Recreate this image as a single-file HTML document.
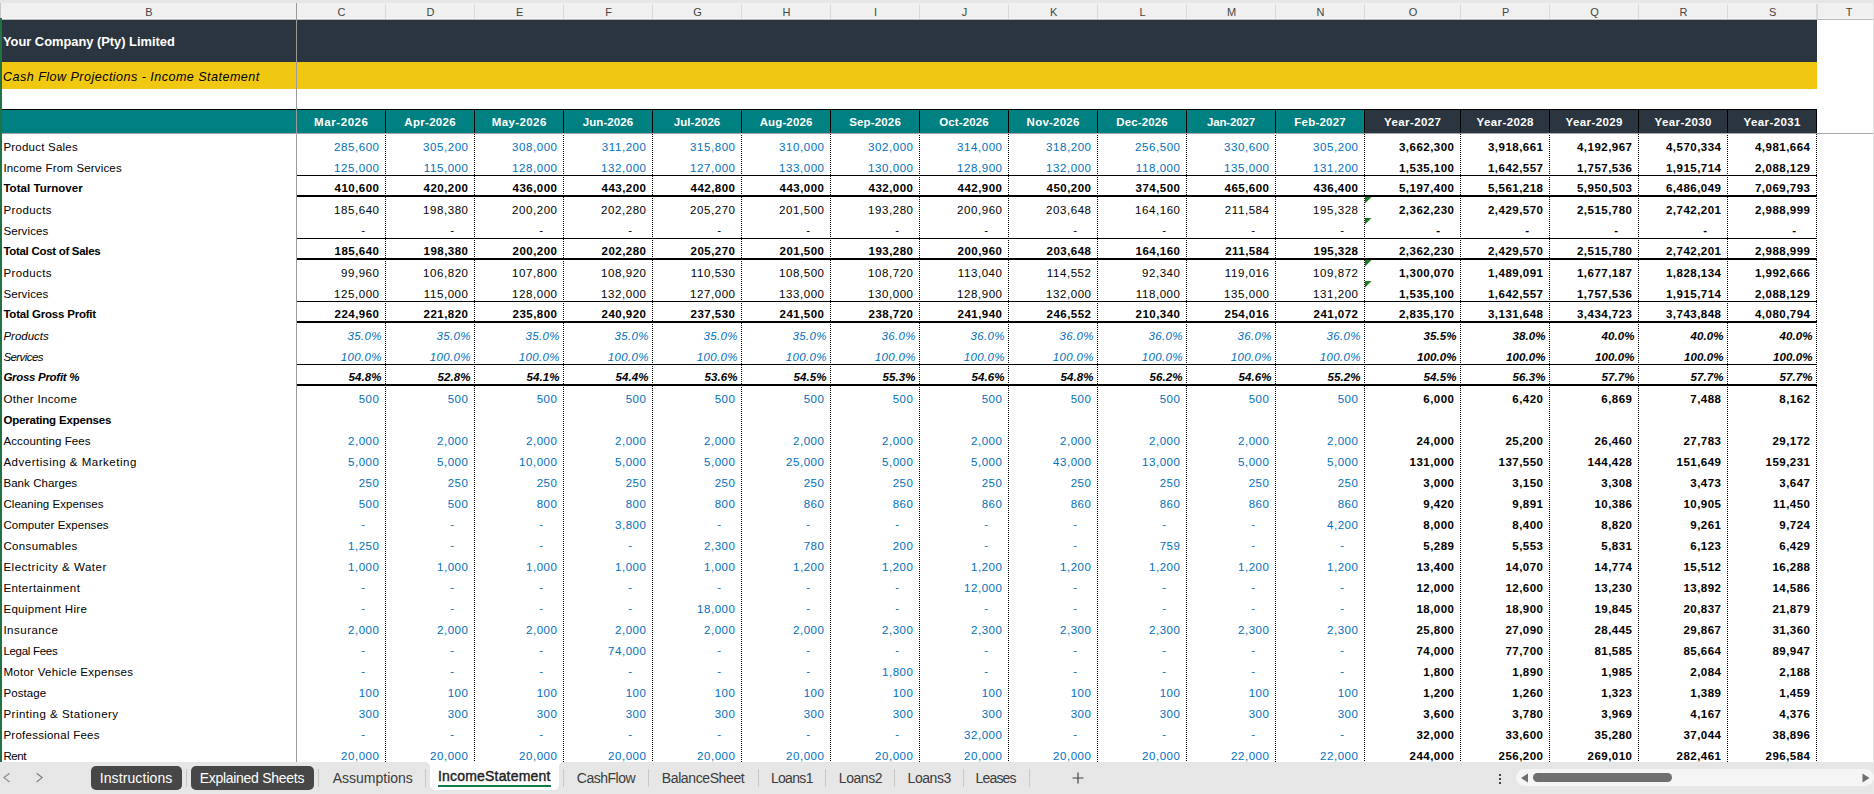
<!DOCTYPE html><html><head><meta charset='utf-8'><title>Income Statement</title><style>
html,body{margin:0;padding:0;}
body{width:1874px;height:794px;overflow:hidden;background:#fff;position:relative;font-family:"Liberation Sans",sans-serif;}
#root{position:absolute;left:0;top:0;width:1874px;height:794px;overflow:hidden;background:#fff;}
.a{position:absolute;white-space:nowrap;}
.bx{position:absolute;}
.t{position:absolute;white-space:nowrap;font-size:11.5px;line-height:14px;height:14px;color:#000;}
.ln{letter-spacing:0.24px} .lb{letter-spacing:-0.1px} .li{letter-spacing:-0.1px} .lbi{letter-spacing:-0.24px}
.nn{letter-spacing:0.57px} .nb{letter-spacing:0.48px} .ni{letter-spacing:0.37px} .nbi{letter-spacing:0.13px}
.r{text-align:right;}
.c{text-align:center;}
.b{font-weight:bold;}
.i{font-style:italic;}
.blue{color:#0070c0;}
.hl{position:absolute;white-space:nowrap;font-size:11px;line-height:14px;height:14px;color:#444;text-align:center;top:5px;}
.mh{position:absolute;white-space:nowrap;font-size:11.5px;letter-spacing:0.6px;line-height:14px;height:14px;color:#fff;font-weight:bold;text-align:center;top:115px;}
.tab{position:absolute;white-space:nowrap;font-size:14px;line-height:16px;height:16px;color:#3c3c3c;top:770px;}
.sep{position:absolute;width:1px;top:769px;height:18px;background:#c8c8c8;}
.dot{position:absolute;width:1px;background-image:repeating-linear-gradient(to bottom,#000 0,#000 1px,transparent 1px,transparent 2px);}
</style></head><body><div id='root'>
<div class='bx' style='left:0;top:0;width:1874px;height:3px;background:#e6e6e6'></div>
<div class='bx' style='left:0;top:3px;width:1874px;height:16px;background:#f0f0f0'></div>
<div class='bx' style='left:0;top:18px;width:1874px;height:1px;background:#f7f7f7'></div>
<div class='bx' style='left:0;top:19px;width:1874px;height:1px;background:#b9b9b9'></div>
<div class='bx' style='left:385px;top:4px;width:1px;height:15px;background:#dadada'></div>
<div class='bx' style='left:474px;top:4px;width:1px;height:15px;background:#dadada'></div>
<div class='bx' style='left:563px;top:4px;width:1px;height:15px;background:#dadada'></div>
<div class='bx' style='left:652px;top:4px;width:1px;height:15px;background:#dadada'></div>
<div class='bx' style='left:741px;top:4px;width:1px;height:15px;background:#dadada'></div>
<div class='bx' style='left:830px;top:4px;width:1px;height:15px;background:#dadada'></div>
<div class='bx' style='left:919px;top:4px;width:1px;height:15px;background:#dadada'></div>
<div class='bx' style='left:1008px;top:4px;width:1px;height:15px;background:#dadada'></div>
<div class='bx' style='left:1097px;top:4px;width:1px;height:15px;background:#dadada'></div>
<div class='bx' style='left:1186px;top:4px;width:1px;height:15px;background:#dadada'></div>
<div class='bx' style='left:1275px;top:4px;width:1px;height:15px;background:#dadada'></div>
<div class='bx' style='left:1364px;top:4px;width:1px;height:15px;background:#dadada'></div>
<div class='bx' style='left:1460px;top:4px;width:1px;height:15px;background:#dadada'></div>
<div class='bx' style='left:1549px;top:4px;width:1px;height:15px;background:#dadada'></div>
<div class='bx' style='left:1638px;top:4px;width:1px;height:15px;background:#dadada'></div>
<div class='bx' style='left:1727px;top:4px;width:1px;height:15px;background:#dadada'></div>
<div class='bx' style='left:1816px;top:4px;width:1px;height:15px;background:#dadada'></div>
<div class='bx' style='left:1817px;top:4px;width:1px;height:15px;background:#dadada'></div>
<div class='hl' style='left:99px;width:100px'>B</div>
<div class='hl' style='left:311.6px;width:60px'>C</div>
<div class='hl' style='left:400.6px;width:60px'>D</div>
<div class='hl' style='left:489.6px;width:60px'>E</div>
<div class='hl' style='left:578.6px;width:60px'>F</div>
<div class='hl' style='left:667.6px;width:60px'>G</div>
<div class='hl' style='left:756.6px;width:60px'>H</div>
<div class='hl' style='left:845.6px;width:60px'>I</div>
<div class='hl' style='left:934.6px;width:60px'>J</div>
<div class='hl' style='left:1023.6px;width:60px'>K</div>
<div class='hl' style='left:1112.6px;width:60px'>L</div>
<div class='hl' style='left:1201.6px;width:60px'>M</div>
<div class='hl' style='left:1290.6px;width:60px'>N</div>
<div class='hl' style='left:1383.1px;width:60px'>O</div>
<div class='hl' style='left:1475.6px;width:60px'>P</div>
<div class='hl' style='left:1564.6px;width:60px'>Q</div>
<div class='hl' style='left:1653.6px;width:60px'>R</div>
<div class='hl' style='left:1742.6px;width:60px'>S</div>
<div class='hl' style='left:1819px;width:60px'>T</div>
<div class='bx' style='left:0;top:20px;width:1817px;height:42px;background:#2b3540'></div>
<div class='bx' style='left:0;top:62px;width:1817px;height:27px;background:#f1c811'></div>
<div class='bx' style='left:0;top:109px;width:1817px;height:1px;background:#000'></div>
<div class='bx' style='left:0;top:110px;width:1365px;height:23px;background:#008080'></div>
<div class='bx' style='left:1365px;top:110px;width:452px;height:23px;background:#2b3540'></div>
<div class='a b' style='left:3px;top:33px;font-size:12.85px;line-height:18px;color:#fff'>Your Company (Pty) Limited</div>
<div class='a i' style='left:3px;top:68px;font-size:12.6px;letter-spacing:0.45px;line-height:18px;color:#000'>Cash Flow Projections - Income Statement</div>
<div class='bx' style='left:385px;top:110px;width:1px;height:23px;background:#000'></div>
<div class='bx' style='left:474px;top:110px;width:1px;height:23px;background:#000'></div>
<div class='bx' style='left:563px;top:110px;width:1px;height:23px;background:#000'></div>
<div class='bx' style='left:652px;top:110px;width:1px;height:23px;background:#000'></div>
<div class='bx' style='left:741px;top:110px;width:1px;height:23px;background:#000'></div>
<div class='bx' style='left:830px;top:110px;width:1px;height:23px;background:#000'></div>
<div class='bx' style='left:919px;top:110px;width:1px;height:23px;background:#000'></div>
<div class='bx' style='left:1008px;top:110px;width:1px;height:23px;background:#000'></div>
<div class='bx' style='left:1097px;top:110px;width:1px;height:23px;background:#000'></div>
<div class='bx' style='left:1186px;top:110px;width:1px;height:23px;background:#000'></div>
<div class='bx' style='left:1275px;top:110px;width:1px;height:23px;background:#000'></div>
<div class='bx' style='left:1364px;top:110px;width:1px;height:23px;background:#000'></div>
<div class='bx' style='left:1460px;top:110px;width:1px;height:23px;background:#000'></div>
<div class='bx' style='left:1549px;top:110px;width:1px;height:23px;background:#000'></div>
<div class='bx' style='left:1638px;top:110px;width:1px;height:23px;background:#000'></div>
<div class='bx' style='left:1727px;top:110px;width:1px;height:23px;background:#000'></div>
<div class='bx' style='left:1816px;top:110px;width:1px;height:23px;background:#000'></div>
<div class='mh' style='left:297.30px;width:88px;letter-spacing:0.6px'>Mar-2026</div>
<div class='mh' style='left:386.15px;width:88px;letter-spacing:0.31px'>Apr-2026</div>
<div class='mh' style='left:475.20px;width:88px;letter-spacing:0.41px'>May-2026</div>
<div class='mh' style='left:564.04px;width:88px;letter-spacing:0.09px'>Jun-2026</div>
<div class='mh' style='left:653.03px;width:88px;letter-spacing:0.07px'>Jul-2026</div>
<div class='mh' style='left:742.07px;width:88px;letter-spacing:0.13px'>Aug-2026</div>
<div class='mh' style='left:831.09px;width:88px;letter-spacing:0.17px'>Sep-2026</div>
<div class='mh' style='left:920.07px;width:88px;letter-spacing:0.14px'>Oct-2026</div>
<div class='mh' style='left:1009.12px;width:88px;letter-spacing:0.23px'>Nov-2026</div>
<div class='mh' style='left:1098.07px;width:88px;letter-spacing:0.13px'>Dec-2026</div>
<div class='mh' style='left:1186.92px;width:88px;letter-spacing:-0.16px'>Jan-2027</div>
<div class='mh' style='left:1276.10px;width:88px;letter-spacing:0.2px'>Feb-2027</div>
<div class='mh' style='left:1368.69px;width:88px;letter-spacing:0.38px'>Year-2027</div>
<div class='mh' style='left:1461.19px;width:88px;letter-spacing:0.38px'>Year-2028</div>
<div class='mh' style='left:1550.19px;width:88px;letter-spacing:0.38px'>Year-2029</div>
<div class='mh' style='left:1639.19px;width:88px;letter-spacing:0.38px'>Year-2030</div>
<div class='mh' style='left:1728.19px;width:88px;letter-spacing:0.38px'>Year-2031</div>
<div class='dot' style='left:385px;top:135px;height:627px'></div>
<div class='dot' style='left:474px;top:134px;height:628px'></div>
<div class='dot' style='left:563px;top:135px;height:627px'></div>
<div class='dot' style='left:652px;top:134px;height:628px'></div>
<div class='dot' style='left:741px;top:135px;height:627px'></div>
<div class='dot' style='left:830px;top:134px;height:628px'></div>
<div class='dot' style='left:919px;top:135px;height:627px'></div>
<div class='dot' style='left:1008px;top:134px;height:628px'></div>
<div class='dot' style='left:1097px;top:135px;height:627px'></div>
<div class='dot' style='left:1186px;top:134px;height:628px'></div>
<div class='dot' style='left:1275px;top:135px;height:627px'></div>
<div class='dot' style='left:1364px;top:134px;height:628px'></div>
<div class='dot' style='left:1460px;top:134px;height:628px'></div>
<div class='dot' style='left:1549px;top:135px;height:627px'></div>
<div class='dot' style='left:1638px;top:134px;height:628px'></div>
<div class='dot' style='left:1727px;top:135px;height:627px'></div>
<div class='dot' style='left:1816px;top:134px;height:628px'></div>
<div class='t ln' style='left:3.4px;top:140px;letter-spacing:0.223px;'>Product Sales</div>
<div class='t blue nn r' style='left:299.57px;width:80px;top:140px'>285,600</div>
<div class='t blue nn r' style='left:388.57px;width:80px;top:140px'>305,200</div>
<div class='t blue nn r' style='left:477.57px;width:80px;top:140px'>308,000</div>
<div class='t blue nn r' style='left:566.57px;width:80px;top:140px'>311,200</div>
<div class='t blue nn r' style='left:655.57px;width:80px;top:140px'>315,800</div>
<div class='t blue nn r' style='left:744.57px;width:80px;top:140px'>310,000</div>
<div class='t blue nn r' style='left:833.57px;width:80px;top:140px'>302,000</div>
<div class='t blue nn r' style='left:922.57px;width:80px;top:140px'>314,000</div>
<div class='t blue nn r' style='left:1011.57px;width:80px;top:140px'>318,200</div>
<div class='t blue nn r' style='left:1100.57px;width:80px;top:140px'>256,500</div>
<div class='t blue nn r' style='left:1189.57px;width:80px;top:140px'>330,600</div>
<div class='t blue nn r' style='left:1278.57px;width:80px;top:140px'>305,200</div>
<div class='t b nb r' style='left:1374.48px;width:80px;top:140px'>3,662,300</div>
<div class='t b nb r' style='left:1463.48px;width:80px;top:140px'>3,918,661</div>
<div class='t b nb r' style='left:1552.48px;width:80px;top:140px'>4,192,967</div>
<div class='t b nb r' style='left:1641.48px;width:80px;top:140px'>4,570,334</div>
<div class='t b nb r' style='left:1730.48px;width:80px;top:140px'>4,981,664</div>
<div class='t ln' style='left:3.4px;top:161px;letter-spacing:0.172px;'>Income From Services</div>
<div class='t blue nn r' style='left:299.57px;width:80px;top:161px'>125,000</div>
<div class='t blue nn r' style='left:388.57px;width:80px;top:161px'>115,000</div>
<div class='t blue nn r' style='left:477.57px;width:80px;top:161px'>128,000</div>
<div class='t blue nn r' style='left:566.57px;width:80px;top:161px'>132,000</div>
<div class='t blue nn r' style='left:655.57px;width:80px;top:161px'>127,000</div>
<div class='t blue nn r' style='left:744.57px;width:80px;top:161px'>133,000</div>
<div class='t blue nn r' style='left:833.57px;width:80px;top:161px'>130,000</div>
<div class='t blue nn r' style='left:922.57px;width:80px;top:161px'>128,900</div>
<div class='t blue nn r' style='left:1011.57px;width:80px;top:161px'>132,000</div>
<div class='t blue nn r' style='left:1100.57px;width:80px;top:161px'>118,000</div>
<div class='t blue nn r' style='left:1189.57px;width:80px;top:161px'>135,000</div>
<div class='t blue nn r' style='left:1278.57px;width:80px;top:161px'>131,200</div>
<div class='t b nb r' style='left:1374.48px;width:80px;top:161px'>1,535,100</div>
<div class='t b nb r' style='left:1463.48px;width:80px;top:161px'>1,642,557</div>
<div class='t b nb r' style='left:1552.48px;width:80px;top:161px'>1,757,536</div>
<div class='t b nb r' style='left:1641.48px;width:80px;top:161px'>1,915,714</div>
<div class='t b nb r' style='left:1730.48px;width:80px;top:161px'>2,088,129</div>
<div class='t b lb' style='left:3.4px;top:181px;letter-spacing:0.038px;'>Total Turnover</div>
<div class='t b nb r' style='left:299.48px;width:80px;top:181px'>410,600</div>
<div class='t b nb r' style='left:388.48px;width:80px;top:181px'>420,200</div>
<div class='t b nb r' style='left:477.48px;width:80px;top:181px'>436,000</div>
<div class='t b nb r' style='left:566.48px;width:80px;top:181px'>443,200</div>
<div class='t b nb r' style='left:655.48px;width:80px;top:181px'>442,800</div>
<div class='t b nb r' style='left:744.48px;width:80px;top:181px'>443,000</div>
<div class='t b nb r' style='left:833.48px;width:80px;top:181px'>432,000</div>
<div class='t b nb r' style='left:922.48px;width:80px;top:181px'>442,900</div>
<div class='t b nb r' style='left:1011.48px;width:80px;top:181px'>450,200</div>
<div class='t b nb r' style='left:1100.48px;width:80px;top:181px'>374,500</div>
<div class='t b nb r' style='left:1189.48px;width:80px;top:181px'>465,600</div>
<div class='t b nb r' style='left:1278.48px;width:80px;top:181px'>436,400</div>
<div class='t b nb r' style='left:1374.48px;width:80px;top:181px'>5,197,400</div>
<div class='t b nb r' style='left:1463.48px;width:80px;top:181px'>5,561,218</div>
<div class='t b nb r' style='left:1552.48px;width:80px;top:181px'>5,950,503</div>
<div class='t b nb r' style='left:1641.48px;width:80px;top:181px'>6,486,049</div>
<div class='t b nb r' style='left:1730.48px;width:80px;top:181px'>7,069,793</div>
<div class='bx' style='left:297px;top:175px;width:1520px;height:1px;background:#000'></div>
<div class='bx' style='left:297px;top:195px;width:1520px;height:2px;background:#000'></div>
<div class='t ln' style='left:3.4px;top:203px;letter-spacing:0.397px;'>Products</div>
<div class='t nn r' style='left:299.57px;width:80px;top:203px'>185,640</div>
<div class='t nn r' style='left:388.57px;width:80px;top:203px'>198,380</div>
<div class='t nn r' style='left:477.57px;width:80px;top:203px'>200,200</div>
<div class='t nn r' style='left:566.57px;width:80px;top:203px'>202,280</div>
<div class='t nn r' style='left:655.57px;width:80px;top:203px'>205,270</div>
<div class='t nn r' style='left:744.57px;width:80px;top:203px'>201,500</div>
<div class='t nn r' style='left:833.57px;width:80px;top:203px'>193,280</div>
<div class='t nn r' style='left:922.57px;width:80px;top:203px'>200,960</div>
<div class='t nn r' style='left:1011.57px;width:80px;top:203px'>203,648</div>
<div class='t nn r' style='left:1100.57px;width:80px;top:203px'>164,160</div>
<div class='t nn r' style='left:1189.57px;width:80px;top:203px'>211,584</div>
<div class='t nn r' style='left:1278.57px;width:80px;top:203px'>195,328</div>
<div class='t b nb r' style='left:1374.48px;width:80px;top:203px'>2,362,230</div>
<div class='t b nb r' style='left:1463.48px;width:80px;top:203px'>2,429,570</div>
<div class='t b nb r' style='left:1552.48px;width:80px;top:203px'>2,515,780</div>
<div class='t b nb r' style='left:1641.48px;width:80px;top:203px'>2,742,201</div>
<div class='t b nb r' style='left:1730.48px;width:80px;top:203px'>2,988,999</div>
<div class='t ln' style='left:3.4px;top:224px;letter-spacing:0.111px;'>Services</div>
<div class='t nn r' style='left:285.57px;width:80px;top:223px'>-</div>
<div class='t nn r' style='left:374.57px;width:80px;top:223px'>-</div>
<div class='t nn r' style='left:463.57px;width:80px;top:223px'>-</div>
<div class='t nn r' style='left:552.57px;width:80px;top:223px'>-</div>
<div class='t nn r' style='left:641.57px;width:80px;top:223px'>-</div>
<div class='t nn r' style='left:730.57px;width:80px;top:223px'>-</div>
<div class='t nn r' style='left:819.57px;width:80px;top:223px'>-</div>
<div class='t nn r' style='left:908.57px;width:80px;top:223px'>-</div>
<div class='t nn r' style='left:997.57px;width:80px;top:223px'>-</div>
<div class='t nn r' style='left:1086.57px;width:80px;top:223px'>-</div>
<div class='t nn r' style='left:1175.57px;width:80px;top:223px'>-</div>
<div class='t nn r' style='left:1264.57px;width:80px;top:223px'>-</div>
<div class='t b nb r' style='left:1360.48px;width:80px;top:223px'>-</div>
<div class='t b nb r' style='left:1449.48px;width:80px;top:223px'>-</div>
<div class='t b nb r' style='left:1538.48px;width:80px;top:223px'>-</div>
<div class='t b nb r' style='left:1627.48px;width:80px;top:223px'>-</div>
<div class='t b nb r' style='left:1716.48px;width:80px;top:223px'>-</div>
<div class='t b lb' style='left:3.4px;top:244px;letter-spacing:-0.300px;'>Total Cost of Sales</div>
<div class='t b nb r' style='left:299.48px;width:80px;top:244px'>185,640</div>
<div class='t b nb r' style='left:388.48px;width:80px;top:244px'>198,380</div>
<div class='t b nb r' style='left:477.48px;width:80px;top:244px'>200,200</div>
<div class='t b nb r' style='left:566.48px;width:80px;top:244px'>202,280</div>
<div class='t b nb r' style='left:655.48px;width:80px;top:244px'>205,270</div>
<div class='t b nb r' style='left:744.48px;width:80px;top:244px'>201,500</div>
<div class='t b nb r' style='left:833.48px;width:80px;top:244px'>193,280</div>
<div class='t b nb r' style='left:922.48px;width:80px;top:244px'>200,960</div>
<div class='t b nb r' style='left:1011.48px;width:80px;top:244px'>203,648</div>
<div class='t b nb r' style='left:1100.48px;width:80px;top:244px'>164,160</div>
<div class='t b nb r' style='left:1189.48px;width:80px;top:244px'>211,584</div>
<div class='t b nb r' style='left:1278.48px;width:80px;top:244px'>195,328</div>
<div class='t b nb r' style='left:1374.48px;width:80px;top:244px'>2,362,230</div>
<div class='t b nb r' style='left:1463.48px;width:80px;top:244px'>2,429,570</div>
<div class='t b nb r' style='left:1552.48px;width:80px;top:244px'>2,515,780</div>
<div class='t b nb r' style='left:1641.48px;width:80px;top:244px'>2,742,201</div>
<div class='t b nb r' style='left:1730.48px;width:80px;top:244px'>2,988,999</div>
<div class='bx' style='left:297px;top:238px;width:1520px;height:1px;background:#000'></div>
<div class='bx' style='left:297px;top:258px;width:1520px;height:2px;background:#000'></div>
<div class='t ln' style='left:3.4px;top:266px;letter-spacing:0.397px;'>Products</div>
<div class='t nn r' style='left:299.57px;width:80px;top:266px'>99,960</div>
<div class='t nn r' style='left:388.57px;width:80px;top:266px'>106,820</div>
<div class='t nn r' style='left:477.57px;width:80px;top:266px'>107,800</div>
<div class='t nn r' style='left:566.57px;width:80px;top:266px'>108,920</div>
<div class='t nn r' style='left:655.57px;width:80px;top:266px'>110,530</div>
<div class='t nn r' style='left:744.57px;width:80px;top:266px'>108,500</div>
<div class='t nn r' style='left:833.57px;width:80px;top:266px'>108,720</div>
<div class='t nn r' style='left:922.57px;width:80px;top:266px'>113,040</div>
<div class='t nn r' style='left:1011.57px;width:80px;top:266px'>114,552</div>
<div class='t nn r' style='left:1100.57px;width:80px;top:266px'>92,340</div>
<div class='t nn r' style='left:1189.57px;width:80px;top:266px'>119,016</div>
<div class='t nn r' style='left:1278.57px;width:80px;top:266px'>109,872</div>
<div class='t b nb r' style='left:1374.48px;width:80px;top:266px'>1,300,070</div>
<div class='t b nb r' style='left:1463.48px;width:80px;top:266px'>1,489,091</div>
<div class='t b nb r' style='left:1552.48px;width:80px;top:266px'>1,677,187</div>
<div class='t b nb r' style='left:1641.48px;width:80px;top:266px'>1,828,134</div>
<div class='t b nb r' style='left:1730.48px;width:80px;top:266px'>1,992,666</div>
<div class='t ln' style='left:3.4px;top:287px;letter-spacing:0.111px;'>Services</div>
<div class='t nn r' style='left:299.57px;width:80px;top:287px'>125,000</div>
<div class='t nn r' style='left:388.57px;width:80px;top:287px'>115,000</div>
<div class='t nn r' style='left:477.57px;width:80px;top:287px'>128,000</div>
<div class='t nn r' style='left:566.57px;width:80px;top:287px'>132,000</div>
<div class='t nn r' style='left:655.57px;width:80px;top:287px'>127,000</div>
<div class='t nn r' style='left:744.57px;width:80px;top:287px'>133,000</div>
<div class='t nn r' style='left:833.57px;width:80px;top:287px'>130,000</div>
<div class='t nn r' style='left:922.57px;width:80px;top:287px'>128,900</div>
<div class='t nn r' style='left:1011.57px;width:80px;top:287px'>132,000</div>
<div class='t nn r' style='left:1100.57px;width:80px;top:287px'>118,000</div>
<div class='t nn r' style='left:1189.57px;width:80px;top:287px'>135,000</div>
<div class='t nn r' style='left:1278.57px;width:80px;top:287px'>131,200</div>
<div class='t b nb r' style='left:1374.48px;width:80px;top:287px'>1,535,100</div>
<div class='t b nb r' style='left:1463.48px;width:80px;top:287px'>1,642,557</div>
<div class='t b nb r' style='left:1552.48px;width:80px;top:287px'>1,757,536</div>
<div class='t b nb r' style='left:1641.48px;width:80px;top:287px'>1,915,714</div>
<div class='t b nb r' style='left:1730.48px;width:80px;top:287px'>2,088,129</div>
<div class='t b lb' style='left:3.4px;top:307px;letter-spacing:-0.206px;'>Total Gross Profit</div>
<div class='t b nb r' style='left:299.48px;width:80px;top:307px'>224,960</div>
<div class='t b nb r' style='left:388.48px;width:80px;top:307px'>221,820</div>
<div class='t b nb r' style='left:477.48px;width:80px;top:307px'>235,800</div>
<div class='t b nb r' style='left:566.48px;width:80px;top:307px'>240,920</div>
<div class='t b nb r' style='left:655.48px;width:80px;top:307px'>237,530</div>
<div class='t b nb r' style='left:744.48px;width:80px;top:307px'>241,500</div>
<div class='t b nb r' style='left:833.48px;width:80px;top:307px'>238,720</div>
<div class='t b nb r' style='left:922.48px;width:80px;top:307px'>241,940</div>
<div class='t b nb r' style='left:1011.48px;width:80px;top:307px'>246,552</div>
<div class='t b nb r' style='left:1100.48px;width:80px;top:307px'>210,340</div>
<div class='t b nb r' style='left:1189.48px;width:80px;top:307px'>254,016</div>
<div class='t b nb r' style='left:1278.48px;width:80px;top:307px'>241,072</div>
<div class='t b nb r' style='left:1374.48px;width:80px;top:307px'>2,835,170</div>
<div class='t b nb r' style='left:1463.48px;width:80px;top:307px'>3,131,648</div>
<div class='t b nb r' style='left:1552.48px;width:80px;top:307px'>3,434,723</div>
<div class='t b nb r' style='left:1641.48px;width:80px;top:307px'>3,743,848</div>
<div class='t b nb r' style='left:1730.48px;width:80px;top:307px'>4,080,794</div>
<div class='bx' style='left:297px;top:301px;width:1520px;height:1px;background:#000'></div>
<div class='bx' style='left:297px;top:321px;width:1520px;height:2px;background:#000'></div>
<div class='t i li' style='left:3.4px;top:329px;letter-spacing:-0.000px;'>Products</div>
<div class='t i blue ni r' style='left:301.97px;width:80px;top:329px'>35.0%</div>
<div class='t i blue ni r' style='left:390.97px;width:80px;top:329px'>35.0%</div>
<div class='t i blue ni r' style='left:479.97px;width:80px;top:329px'>35.0%</div>
<div class='t i blue ni r' style='left:568.97px;width:80px;top:329px'>35.0%</div>
<div class='t i blue ni r' style='left:657.97px;width:80px;top:329px'>35.0%</div>
<div class='t i blue ni r' style='left:746.97px;width:80px;top:329px'>35.0%</div>
<div class='t i blue ni r' style='left:835.97px;width:80px;top:329px'>36.0%</div>
<div class='t i blue ni r' style='left:924.97px;width:80px;top:329px'>36.0%</div>
<div class='t i blue ni r' style='left:1013.97px;width:80px;top:329px'>36.0%</div>
<div class='t i blue ni r' style='left:1102.97px;width:80px;top:329px'>36.0%</div>
<div class='t i blue ni r' style='left:1191.97px;width:80px;top:329px'>36.0%</div>
<div class='t i blue ni r' style='left:1280.97px;width:80px;top:329px'>36.0%</div>
<div class='t i b nbi r' style='left:1376.73px;width:80px;top:329px'>35.5%</div>
<div class='t i b nbi r' style='left:1465.73px;width:80px;top:329px'>38.0%</div>
<div class='t i b nbi r' style='left:1554.73px;width:80px;top:329px'>40.0%</div>
<div class='t i b nbi r' style='left:1643.73px;width:80px;top:329px'>40.0%</div>
<div class='t i b nbi r' style='left:1732.73px;width:80px;top:329px'>40.0%</div>
<div class='t i li' style='left:3.4px;top:350px;letter-spacing:-0.557px;'>Services</div>
<div class='t i blue ni r' style='left:301.97px;width:80px;top:350px'>100.0%</div>
<div class='t i blue ni r' style='left:390.97px;width:80px;top:350px'>100.0%</div>
<div class='t i blue ni r' style='left:479.97px;width:80px;top:350px'>100.0%</div>
<div class='t i blue ni r' style='left:568.97px;width:80px;top:350px'>100.0%</div>
<div class='t i blue ni r' style='left:657.97px;width:80px;top:350px'>100.0%</div>
<div class='t i blue ni r' style='left:746.97px;width:80px;top:350px'>100.0%</div>
<div class='t i blue ni r' style='left:835.97px;width:80px;top:350px'>100.0%</div>
<div class='t i blue ni r' style='left:924.97px;width:80px;top:350px'>100.0%</div>
<div class='t i blue ni r' style='left:1013.97px;width:80px;top:350px'>100.0%</div>
<div class='t i blue ni r' style='left:1102.97px;width:80px;top:350px'>100.0%</div>
<div class='t i blue ni r' style='left:1191.97px;width:80px;top:350px'>100.0%</div>
<div class='t i blue ni r' style='left:1280.97px;width:80px;top:350px'>100.0%</div>
<div class='t i b nbi r' style='left:1376.73px;width:80px;top:350px'>100.0%</div>
<div class='t i b nbi r' style='left:1465.73px;width:80px;top:350px'>100.0%</div>
<div class='t i b nbi r' style='left:1554.73px;width:80px;top:350px'>100.0%</div>
<div class='t i b nbi r' style='left:1643.73px;width:80px;top:350px'>100.0%</div>
<div class='t i b nbi r' style='left:1732.73px;width:80px;top:350px'>100.0%</div>
<div class='t b i lbi' style='left:3.4px;top:370px;letter-spacing:-0.294px;'>Gross Profit %</div>
<div class='t b i nbi r' style='left:301.73px;width:80px;top:370px'>54.8%</div>
<div class='t b i nbi r' style='left:390.73px;width:80px;top:370px'>52.8%</div>
<div class='t b i nbi r' style='left:479.73px;width:80px;top:370px'>54.1%</div>
<div class='t b i nbi r' style='left:568.73px;width:80px;top:370px'>54.4%</div>
<div class='t b i nbi r' style='left:657.73px;width:80px;top:370px'>53.6%</div>
<div class='t b i nbi r' style='left:746.73px;width:80px;top:370px'>54.5%</div>
<div class='t b i nbi r' style='left:835.73px;width:80px;top:370px'>55.3%</div>
<div class='t b i nbi r' style='left:924.73px;width:80px;top:370px'>54.6%</div>
<div class='t b i nbi r' style='left:1013.73px;width:80px;top:370px'>54.8%</div>
<div class='t b i nbi r' style='left:1102.73px;width:80px;top:370px'>56.2%</div>
<div class='t b i nbi r' style='left:1191.73px;width:80px;top:370px'>54.6%</div>
<div class='t b i nbi r' style='left:1280.73px;width:80px;top:370px'>55.2%</div>
<div class='t b i nbi r' style='left:1376.73px;width:80px;top:370px'>54.5%</div>
<div class='t b i nbi r' style='left:1465.73px;width:80px;top:370px'>56.3%</div>
<div class='t b i nbi r' style='left:1554.73px;width:80px;top:370px'>57.7%</div>
<div class='t b i nbi r' style='left:1643.73px;width:80px;top:370px'>57.7%</div>
<div class='t b i nbi r' style='left:1732.73px;width:80px;top:370px'>57.7%</div>
<div class='bx' style='left:297px;top:364px;width:1520px;height:1px;background:#000'></div>
<div class='bx' style='left:297px;top:384px;width:1520px;height:2px;background:#000'></div>
<div class='t ln' style='left:3.4px;top:392px;letter-spacing:0.340px;'>Other Income</div>
<div class='t blue nn r' style='left:299.57px;width:80px;top:392px'>500</div>
<div class='t blue nn r' style='left:388.57px;width:80px;top:392px'>500</div>
<div class='t blue nn r' style='left:477.57px;width:80px;top:392px'>500</div>
<div class='t blue nn r' style='left:566.57px;width:80px;top:392px'>500</div>
<div class='t blue nn r' style='left:655.57px;width:80px;top:392px'>500</div>
<div class='t blue nn r' style='left:744.57px;width:80px;top:392px'>500</div>
<div class='t blue nn r' style='left:833.57px;width:80px;top:392px'>500</div>
<div class='t blue nn r' style='left:922.57px;width:80px;top:392px'>500</div>
<div class='t blue nn r' style='left:1011.57px;width:80px;top:392px'>500</div>
<div class='t blue nn r' style='left:1100.57px;width:80px;top:392px'>500</div>
<div class='t blue nn r' style='left:1189.57px;width:80px;top:392px'>500</div>
<div class='t blue nn r' style='left:1278.57px;width:80px;top:392px'>500</div>
<div class='t b nb r' style='left:1374.48px;width:80px;top:392px'>6,000</div>
<div class='t b nb r' style='left:1463.48px;width:80px;top:392px'>6,420</div>
<div class='t b nb r' style='left:1552.48px;width:80px;top:392px'>6,869</div>
<div class='t b nb r' style='left:1641.48px;width:80px;top:392px'>7,488</div>
<div class='t b nb r' style='left:1730.48px;width:80px;top:392px'>8,162</div>
<div class='t b lb' style='left:3.4px;top:413px;letter-spacing:-0.194px;'>Operating Expenses</div>
<div class='t ln' style='left:3.4px;top:434px;letter-spacing:0.111px;'>Accounting Fees</div>
<div class='t blue nn r' style='left:299.57px;width:80px;top:434px'>2,000</div>
<div class='t blue nn r' style='left:388.57px;width:80px;top:434px'>2,000</div>
<div class='t blue nn r' style='left:477.57px;width:80px;top:434px'>2,000</div>
<div class='t blue nn r' style='left:566.57px;width:80px;top:434px'>2,000</div>
<div class='t blue nn r' style='left:655.57px;width:80px;top:434px'>2,000</div>
<div class='t blue nn r' style='left:744.57px;width:80px;top:434px'>2,000</div>
<div class='t blue nn r' style='left:833.57px;width:80px;top:434px'>2,000</div>
<div class='t blue nn r' style='left:922.57px;width:80px;top:434px'>2,000</div>
<div class='t blue nn r' style='left:1011.57px;width:80px;top:434px'>2,000</div>
<div class='t blue nn r' style='left:1100.57px;width:80px;top:434px'>2,000</div>
<div class='t blue nn r' style='left:1189.57px;width:80px;top:434px'>2,000</div>
<div class='t blue nn r' style='left:1278.57px;width:80px;top:434px'>2,000</div>
<div class='t b nb r' style='left:1374.48px;width:80px;top:434px'>24,000</div>
<div class='t b nb r' style='left:1463.48px;width:80px;top:434px'>25,200</div>
<div class='t b nb r' style='left:1552.48px;width:80px;top:434px'>26,460</div>
<div class='t b nb r' style='left:1641.48px;width:80px;top:434px'>27,783</div>
<div class='t b nb r' style='left:1730.48px;width:80px;top:434px'>29,172</div>
<div class='t ln' style='left:3.4px;top:455px;letter-spacing:0.526px;'>Advertising &amp; Marketing</div>
<div class='t blue nn r' style='left:299.57px;width:80px;top:455px'>5,000</div>
<div class='t blue nn r' style='left:388.57px;width:80px;top:455px'>5,000</div>
<div class='t blue nn r' style='left:477.57px;width:80px;top:455px'>10,000</div>
<div class='t blue nn r' style='left:566.57px;width:80px;top:455px'>5,000</div>
<div class='t blue nn r' style='left:655.57px;width:80px;top:455px'>5,000</div>
<div class='t blue nn r' style='left:744.57px;width:80px;top:455px'>25,000</div>
<div class='t blue nn r' style='left:833.57px;width:80px;top:455px'>5,000</div>
<div class='t blue nn r' style='left:922.57px;width:80px;top:455px'>5,000</div>
<div class='t blue nn r' style='left:1011.57px;width:80px;top:455px'>43,000</div>
<div class='t blue nn r' style='left:1100.57px;width:80px;top:455px'>13,000</div>
<div class='t blue nn r' style='left:1189.57px;width:80px;top:455px'>5,000</div>
<div class='t blue nn r' style='left:1278.57px;width:80px;top:455px'>5,000</div>
<div class='t b nb r' style='left:1374.48px;width:80px;top:455px'>131,000</div>
<div class='t b nb r' style='left:1463.48px;width:80px;top:455px'>137,550</div>
<div class='t b nb r' style='left:1552.48px;width:80px;top:455px'>144,428</div>
<div class='t b nb r' style='left:1641.48px;width:80px;top:455px'>151,649</div>
<div class='t b nb r' style='left:1730.48px;width:80px;top:455px'>159,231</div>
<div class='t ln' style='left:3.4px;top:476px;letter-spacing:0.076px;'>Bank Charges</div>
<div class='t blue nn r' style='left:299.57px;width:80px;top:476px'>250</div>
<div class='t blue nn r' style='left:388.57px;width:80px;top:476px'>250</div>
<div class='t blue nn r' style='left:477.57px;width:80px;top:476px'>250</div>
<div class='t blue nn r' style='left:566.57px;width:80px;top:476px'>250</div>
<div class='t blue nn r' style='left:655.57px;width:80px;top:476px'>250</div>
<div class='t blue nn r' style='left:744.57px;width:80px;top:476px'>250</div>
<div class='t blue nn r' style='left:833.57px;width:80px;top:476px'>250</div>
<div class='t blue nn r' style='left:922.57px;width:80px;top:476px'>250</div>
<div class='t blue nn r' style='left:1011.57px;width:80px;top:476px'>250</div>
<div class='t blue nn r' style='left:1100.57px;width:80px;top:476px'>250</div>
<div class='t blue nn r' style='left:1189.57px;width:80px;top:476px'>250</div>
<div class='t blue nn r' style='left:1278.57px;width:80px;top:476px'>250</div>
<div class='t b nb r' style='left:1374.48px;width:80px;top:476px'>3,000</div>
<div class='t b nb r' style='left:1463.48px;width:80px;top:476px'>3,150</div>
<div class='t b nb r' style='left:1552.48px;width:80px;top:476px'>3,308</div>
<div class='t b nb r' style='left:1641.48px;width:80px;top:476px'>3,473</div>
<div class='t b nb r' style='left:1730.48px;width:80px;top:476px'>3,647</div>
<div class='t ln' style='left:3.4px;top:497px;letter-spacing:0.065px;'>Cleaning Expenses</div>
<div class='t blue nn r' style='left:299.57px;width:80px;top:497px'>500</div>
<div class='t blue nn r' style='left:388.57px;width:80px;top:497px'>500</div>
<div class='t blue nn r' style='left:477.57px;width:80px;top:497px'>800</div>
<div class='t blue nn r' style='left:566.57px;width:80px;top:497px'>800</div>
<div class='t blue nn r' style='left:655.57px;width:80px;top:497px'>800</div>
<div class='t blue nn r' style='left:744.57px;width:80px;top:497px'>860</div>
<div class='t blue nn r' style='left:833.57px;width:80px;top:497px'>860</div>
<div class='t blue nn r' style='left:922.57px;width:80px;top:497px'>860</div>
<div class='t blue nn r' style='left:1011.57px;width:80px;top:497px'>860</div>
<div class='t blue nn r' style='left:1100.57px;width:80px;top:497px'>860</div>
<div class='t blue nn r' style='left:1189.57px;width:80px;top:497px'>860</div>
<div class='t blue nn r' style='left:1278.57px;width:80px;top:497px'>860</div>
<div class='t b nb r' style='left:1374.48px;width:80px;top:497px'>9,420</div>
<div class='t b nb r' style='left:1463.48px;width:80px;top:497px'>9,891</div>
<div class='t b nb r' style='left:1552.48px;width:80px;top:497px'>10,386</div>
<div class='t b nb r' style='left:1641.48px;width:80px;top:497px'>10,905</div>
<div class='t b nb r' style='left:1730.48px;width:80px;top:497px'>11,450</div>
<div class='t ln' style='left:3.4px;top:518px;letter-spacing:0.065px;'>Computer Expenses</div>
<div class='t blue nn r' style='left:285.57px;width:80px;top:517px'>-</div>
<div class='t blue nn r' style='left:374.57px;width:80px;top:517px'>-</div>
<div class='t blue nn r' style='left:463.57px;width:80px;top:517px'>-</div>
<div class='t blue nn r' style='left:566.57px;width:80px;top:518px'>3,800</div>
<div class='t blue nn r' style='left:641.57px;width:80px;top:517px'>-</div>
<div class='t blue nn r' style='left:730.57px;width:80px;top:517px'>-</div>
<div class='t blue nn r' style='left:819.57px;width:80px;top:517px'>-</div>
<div class='t blue nn r' style='left:908.57px;width:80px;top:517px'>-</div>
<div class='t blue nn r' style='left:997.57px;width:80px;top:517px'>-</div>
<div class='t blue nn r' style='left:1086.57px;width:80px;top:517px'>-</div>
<div class='t blue nn r' style='left:1175.57px;width:80px;top:517px'>-</div>
<div class='t blue nn r' style='left:1278.57px;width:80px;top:518px'>4,200</div>
<div class='t b nb r' style='left:1374.48px;width:80px;top:518px'>8,000</div>
<div class='t b nb r' style='left:1463.48px;width:80px;top:518px'>8,400</div>
<div class='t b nb r' style='left:1552.48px;width:80px;top:518px'>8,820</div>
<div class='t b nb r' style='left:1641.48px;width:80px;top:518px'>9,261</div>
<div class='t b nb r' style='left:1730.48px;width:80px;top:518px'>9,724</div>
<div class='t ln' style='left:3.4px;top:539px;letter-spacing:0.350px;'>Consumables</div>
<div class='t blue nn r' style='left:299.57px;width:80px;top:539px'>1,250</div>
<div class='t blue nn r' style='left:374.57px;width:80px;top:538px'>-</div>
<div class='t blue nn r' style='left:463.57px;width:80px;top:538px'>-</div>
<div class='t blue nn r' style='left:552.57px;width:80px;top:538px'>-</div>
<div class='t blue nn r' style='left:655.57px;width:80px;top:539px'>2,300</div>
<div class='t blue nn r' style='left:744.57px;width:80px;top:539px'>780</div>
<div class='t blue nn r' style='left:833.57px;width:80px;top:539px'>200</div>
<div class='t blue nn r' style='left:908.57px;width:80px;top:538px'>-</div>
<div class='t blue nn r' style='left:997.57px;width:80px;top:538px'>-</div>
<div class='t blue nn r' style='left:1100.57px;width:80px;top:539px'>759</div>
<div class='t blue nn r' style='left:1175.57px;width:80px;top:538px'>-</div>
<div class='t blue nn r' style='left:1264.57px;width:80px;top:538px'>-</div>
<div class='t b nb r' style='left:1374.48px;width:80px;top:539px'>5,289</div>
<div class='t b nb r' style='left:1463.48px;width:80px;top:539px'>5,553</div>
<div class='t b nb r' style='left:1552.48px;width:80px;top:539px'>5,831</div>
<div class='t b nb r' style='left:1641.48px;width:80px;top:539px'>6,123</div>
<div class='t b nb r' style='left:1730.48px;width:80px;top:539px'>6,429</div>
<div class='t ln' style='left:3.4px;top:560px;letter-spacing:0.523px;'>Electricity &amp; Water</div>
<div class='t blue nn r' style='left:299.57px;width:80px;top:560px'>1,000</div>
<div class='t blue nn r' style='left:388.57px;width:80px;top:560px'>1,000</div>
<div class='t blue nn r' style='left:477.57px;width:80px;top:560px'>1,000</div>
<div class='t blue nn r' style='left:566.57px;width:80px;top:560px'>1,000</div>
<div class='t blue nn r' style='left:655.57px;width:80px;top:560px'>1,000</div>
<div class='t blue nn r' style='left:744.57px;width:80px;top:560px'>1,200</div>
<div class='t blue nn r' style='left:833.57px;width:80px;top:560px'>1,200</div>
<div class='t blue nn r' style='left:922.57px;width:80px;top:560px'>1,200</div>
<div class='t blue nn r' style='left:1011.57px;width:80px;top:560px'>1,200</div>
<div class='t blue nn r' style='left:1100.57px;width:80px;top:560px'>1,200</div>
<div class='t blue nn r' style='left:1189.57px;width:80px;top:560px'>1,200</div>
<div class='t blue nn r' style='left:1278.57px;width:80px;top:560px'>1,200</div>
<div class='t b nb r' style='left:1374.48px;width:80px;top:560px'>13,400</div>
<div class='t b nb r' style='left:1463.48px;width:80px;top:560px'>14,070</div>
<div class='t b nb r' style='left:1552.48px;width:80px;top:560px'>14,774</div>
<div class='t b nb r' style='left:1641.48px;width:80px;top:560px'>15,512</div>
<div class='t b nb r' style='left:1730.48px;width:80px;top:560px'>16,288</div>
<div class='t ln' style='left:3.4px;top:581px;letter-spacing:0.407px;'>Entertainment</div>
<div class='t blue nn r' style='left:285.57px;width:80px;top:580px'>-</div>
<div class='t blue nn r' style='left:374.57px;width:80px;top:580px'>-</div>
<div class='t blue nn r' style='left:463.57px;width:80px;top:580px'>-</div>
<div class='t blue nn r' style='left:552.57px;width:80px;top:580px'>-</div>
<div class='t blue nn r' style='left:641.57px;width:80px;top:580px'>-</div>
<div class='t blue nn r' style='left:730.57px;width:80px;top:580px'>-</div>
<div class='t blue nn r' style='left:819.57px;width:80px;top:580px'>-</div>
<div class='t blue nn r' style='left:922.57px;width:80px;top:581px'>12,000</div>
<div class='t blue nn r' style='left:997.57px;width:80px;top:580px'>-</div>
<div class='t blue nn r' style='left:1086.57px;width:80px;top:580px'>-</div>
<div class='t blue nn r' style='left:1175.57px;width:80px;top:580px'>-</div>
<div class='t blue nn r' style='left:1264.57px;width:80px;top:580px'>-</div>
<div class='t b nb r' style='left:1374.48px;width:80px;top:581px'>12,000</div>
<div class='t b nb r' style='left:1463.48px;width:80px;top:581px'>12,600</div>
<div class='t b nb r' style='left:1552.48px;width:80px;top:581px'>13,230</div>
<div class='t b nb r' style='left:1641.48px;width:80px;top:581px'>13,892</div>
<div class='t b nb r' style='left:1730.48px;width:80px;top:581px'>14,586</div>
<div class='t ln' style='left:3.4px;top:602px;letter-spacing:0.325px;'>Equipment Hire</div>
<div class='t blue nn r' style='left:285.57px;width:80px;top:601px'>-</div>
<div class='t blue nn r' style='left:374.57px;width:80px;top:601px'>-</div>
<div class='t blue nn r' style='left:463.57px;width:80px;top:601px'>-</div>
<div class='t blue nn r' style='left:552.57px;width:80px;top:601px'>-</div>
<div class='t blue nn r' style='left:655.57px;width:80px;top:602px'>18,000</div>
<div class='t blue nn r' style='left:730.57px;width:80px;top:601px'>-</div>
<div class='t blue nn r' style='left:819.57px;width:80px;top:601px'>-</div>
<div class='t blue nn r' style='left:908.57px;width:80px;top:601px'>-</div>
<div class='t blue nn r' style='left:997.57px;width:80px;top:601px'>-</div>
<div class='t blue nn r' style='left:1086.57px;width:80px;top:601px'>-</div>
<div class='t blue nn r' style='left:1175.57px;width:80px;top:601px'>-</div>
<div class='t blue nn r' style='left:1264.57px;width:80px;top:601px'>-</div>
<div class='t b nb r' style='left:1374.48px;width:80px;top:602px'>18,000</div>
<div class='t b nb r' style='left:1463.48px;width:80px;top:602px'>18,900</div>
<div class='t b nb r' style='left:1552.48px;width:80px;top:602px'>19,845</div>
<div class='t b nb r' style='left:1641.48px;width:80px;top:602px'>20,837</div>
<div class='t b nb r' style='left:1730.48px;width:80px;top:602px'>21,879</div>
<div class='t ln' style='left:3.4px;top:623px;letter-spacing:0.503px;'>Insurance</div>
<div class='t blue nn r' style='left:299.57px;width:80px;top:623px'>2,000</div>
<div class='t blue nn r' style='left:388.57px;width:80px;top:623px'>2,000</div>
<div class='t blue nn r' style='left:477.57px;width:80px;top:623px'>2,000</div>
<div class='t blue nn r' style='left:566.57px;width:80px;top:623px'>2,000</div>
<div class='t blue nn r' style='left:655.57px;width:80px;top:623px'>2,000</div>
<div class='t blue nn r' style='left:744.57px;width:80px;top:623px'>2,000</div>
<div class='t blue nn r' style='left:833.57px;width:80px;top:623px'>2,300</div>
<div class='t blue nn r' style='left:922.57px;width:80px;top:623px'>2,300</div>
<div class='t blue nn r' style='left:1011.57px;width:80px;top:623px'>2,300</div>
<div class='t blue nn r' style='left:1100.57px;width:80px;top:623px'>2,300</div>
<div class='t blue nn r' style='left:1189.57px;width:80px;top:623px'>2,300</div>
<div class='t blue nn r' style='left:1278.57px;width:80px;top:623px'>2,300</div>
<div class='t b nb r' style='left:1374.48px;width:80px;top:623px'>25,800</div>
<div class='t b nb r' style='left:1463.48px;width:80px;top:623px'>27,090</div>
<div class='t b nb r' style='left:1552.48px;width:80px;top:623px'>28,445</div>
<div class='t b nb r' style='left:1641.48px;width:80px;top:623px'>29,867</div>
<div class='t b nb r' style='left:1730.48px;width:80px;top:623px'>31,360</div>
<div class='t ln' style='left:3.4px;top:644px;letter-spacing:-0.293px;'>Legal Fees</div>
<div class='t blue nn r' style='left:285.57px;width:80px;top:643px'>-</div>
<div class='t blue nn r' style='left:374.57px;width:80px;top:643px'>-</div>
<div class='t blue nn r' style='left:463.57px;width:80px;top:643px'>-</div>
<div class='t blue nn r' style='left:566.57px;width:80px;top:644px'>74,000</div>
<div class='t blue nn r' style='left:641.57px;width:80px;top:643px'>-</div>
<div class='t blue nn r' style='left:730.57px;width:80px;top:643px'>-</div>
<div class='t blue nn r' style='left:819.57px;width:80px;top:643px'>-</div>
<div class='t blue nn r' style='left:908.57px;width:80px;top:643px'>-</div>
<div class='t blue nn r' style='left:997.57px;width:80px;top:643px'>-</div>
<div class='t blue nn r' style='left:1086.57px;width:80px;top:643px'>-</div>
<div class='t blue nn r' style='left:1175.57px;width:80px;top:643px'>-</div>
<div class='t blue nn r' style='left:1264.57px;width:80px;top:643px'>-</div>
<div class='t b nb r' style='left:1374.48px;width:80px;top:644px'>74,000</div>
<div class='t b nb r' style='left:1463.48px;width:80px;top:644px'>77,700</div>
<div class='t b nb r' style='left:1552.48px;width:80px;top:644px'>81,585</div>
<div class='t b nb r' style='left:1641.48px;width:80px;top:644px'>85,664</div>
<div class='t b nb r' style='left:1730.48px;width:80px;top:644px'>89,947</div>
<div class='t ln' style='left:3.4px;top:665px;letter-spacing:0.292px;'>Motor Vehicle Expenses</div>
<div class='t blue nn r' style='left:285.57px;width:80px;top:664px'>-</div>
<div class='t blue nn r' style='left:374.57px;width:80px;top:664px'>-</div>
<div class='t blue nn r' style='left:463.57px;width:80px;top:664px'>-</div>
<div class='t blue nn r' style='left:552.57px;width:80px;top:664px'>-</div>
<div class='t blue nn r' style='left:641.57px;width:80px;top:664px'>-</div>
<div class='t blue nn r' style='left:730.57px;width:80px;top:664px'>-</div>
<div class='t blue nn r' style='left:833.57px;width:80px;top:665px'>1,800</div>
<div class='t blue nn r' style='left:908.57px;width:80px;top:664px'>-</div>
<div class='t blue nn r' style='left:997.57px;width:80px;top:664px'>-</div>
<div class='t blue nn r' style='left:1086.57px;width:80px;top:664px'>-</div>
<div class='t blue nn r' style='left:1175.57px;width:80px;top:664px'>-</div>
<div class='t blue nn r' style='left:1264.57px;width:80px;top:664px'>-</div>
<div class='t b nb r' style='left:1374.48px;width:80px;top:665px'>1,800</div>
<div class='t b nb r' style='left:1463.48px;width:80px;top:665px'>1,890</div>
<div class='t b nb r' style='left:1552.48px;width:80px;top:665px'>1,985</div>
<div class='t b nb r' style='left:1641.48px;width:80px;top:665px'>2,084</div>
<div class='t b nb r' style='left:1730.48px;width:80px;top:665px'>2,188</div>
<div class='t ln' style='left:3.4px;top:686px;letter-spacing:0.090px;'>Postage</div>
<div class='t blue nn r' style='left:299.57px;width:80px;top:686px'>100</div>
<div class='t blue nn r' style='left:388.57px;width:80px;top:686px'>100</div>
<div class='t blue nn r' style='left:477.57px;width:80px;top:686px'>100</div>
<div class='t blue nn r' style='left:566.57px;width:80px;top:686px'>100</div>
<div class='t blue nn r' style='left:655.57px;width:80px;top:686px'>100</div>
<div class='t blue nn r' style='left:744.57px;width:80px;top:686px'>100</div>
<div class='t blue nn r' style='left:833.57px;width:80px;top:686px'>100</div>
<div class='t blue nn r' style='left:922.57px;width:80px;top:686px'>100</div>
<div class='t blue nn r' style='left:1011.57px;width:80px;top:686px'>100</div>
<div class='t blue nn r' style='left:1100.57px;width:80px;top:686px'>100</div>
<div class='t blue nn r' style='left:1189.57px;width:80px;top:686px'>100</div>
<div class='t blue nn r' style='left:1278.57px;width:80px;top:686px'>100</div>
<div class='t b nb r' style='left:1374.48px;width:80px;top:686px'>1,200</div>
<div class='t b nb r' style='left:1463.48px;width:80px;top:686px'>1,260</div>
<div class='t b nb r' style='left:1552.48px;width:80px;top:686px'>1,323</div>
<div class='t b nb r' style='left:1641.48px;width:80px;top:686px'>1,389</div>
<div class='t b nb r' style='left:1730.48px;width:80px;top:686px'>1,459</div>
<div class='t ln' style='left:3.4px;top:707px;letter-spacing:0.495px;'>Printing &amp; Stationery</div>
<div class='t blue nn r' style='left:299.57px;width:80px;top:707px'>300</div>
<div class='t blue nn r' style='left:388.57px;width:80px;top:707px'>300</div>
<div class='t blue nn r' style='left:477.57px;width:80px;top:707px'>300</div>
<div class='t blue nn r' style='left:566.57px;width:80px;top:707px'>300</div>
<div class='t blue nn r' style='left:655.57px;width:80px;top:707px'>300</div>
<div class='t blue nn r' style='left:744.57px;width:80px;top:707px'>300</div>
<div class='t blue nn r' style='left:833.57px;width:80px;top:707px'>300</div>
<div class='t blue nn r' style='left:922.57px;width:80px;top:707px'>300</div>
<div class='t blue nn r' style='left:1011.57px;width:80px;top:707px'>300</div>
<div class='t blue nn r' style='left:1100.57px;width:80px;top:707px'>300</div>
<div class='t blue nn r' style='left:1189.57px;width:80px;top:707px'>300</div>
<div class='t blue nn r' style='left:1278.57px;width:80px;top:707px'>300</div>
<div class='t b nb r' style='left:1374.48px;width:80px;top:707px'>3,600</div>
<div class='t b nb r' style='left:1463.48px;width:80px;top:707px'>3,780</div>
<div class='t b nb r' style='left:1552.48px;width:80px;top:707px'>3,969</div>
<div class='t b nb r' style='left:1641.48px;width:80px;top:707px'>4,167</div>
<div class='t b nb r' style='left:1730.48px;width:80px;top:707px'>4,376</div>
<div class='t ln' style='left:3.4px;top:728px;letter-spacing:0.253px;'>Professional Fees</div>
<div class='t blue nn r' style='left:285.57px;width:80px;top:727px'>-</div>
<div class='t blue nn r' style='left:374.57px;width:80px;top:727px'>-</div>
<div class='t blue nn r' style='left:463.57px;width:80px;top:727px'>-</div>
<div class='t blue nn r' style='left:552.57px;width:80px;top:727px'>-</div>
<div class='t blue nn r' style='left:641.57px;width:80px;top:727px'>-</div>
<div class='t blue nn r' style='left:730.57px;width:80px;top:727px'>-</div>
<div class='t blue nn r' style='left:819.57px;width:80px;top:727px'>-</div>
<div class='t blue nn r' style='left:922.57px;width:80px;top:728px'>32,000</div>
<div class='t blue nn r' style='left:997.57px;width:80px;top:727px'>-</div>
<div class='t blue nn r' style='left:1086.57px;width:80px;top:727px'>-</div>
<div class='t blue nn r' style='left:1175.57px;width:80px;top:727px'>-</div>
<div class='t blue nn r' style='left:1264.57px;width:80px;top:727px'>-</div>
<div class='t b nb r' style='left:1374.48px;width:80px;top:728px'>32,000</div>
<div class='t b nb r' style='left:1463.48px;width:80px;top:728px'>33,600</div>
<div class='t b nb r' style='left:1552.48px;width:80px;top:728px'>35,280</div>
<div class='t b nb r' style='left:1641.48px;width:80px;top:728px'>37,044</div>
<div class='t b nb r' style='left:1730.48px;width:80px;top:728px'>38,896</div>
<div class='t ln' style='left:3.4px;top:749px;letter-spacing:-0.393px;'>Rent</div>
<div class='t blue nn r' style='left:299.57px;width:80px;top:749px'>20,000</div>
<div class='t blue nn r' style='left:388.57px;width:80px;top:749px'>20,000</div>
<div class='t blue nn r' style='left:477.57px;width:80px;top:749px'>20,000</div>
<div class='t blue nn r' style='left:566.57px;width:80px;top:749px'>20,000</div>
<div class='t blue nn r' style='left:655.57px;width:80px;top:749px'>20,000</div>
<div class='t blue nn r' style='left:744.57px;width:80px;top:749px'>20,000</div>
<div class='t blue nn r' style='left:833.57px;width:80px;top:749px'>20,000</div>
<div class='t blue nn r' style='left:922.57px;width:80px;top:749px'>20,000</div>
<div class='t blue nn r' style='left:1011.57px;width:80px;top:749px'>20,000</div>
<div class='t blue nn r' style='left:1100.57px;width:80px;top:749px'>20,000</div>
<div class='t blue nn r' style='left:1189.57px;width:80px;top:749px'>22,000</div>
<div class='t blue nn r' style='left:1278.57px;width:80px;top:749px'>22,000</div>
<div class='t b nb r' style='left:1374.48px;width:80px;top:749px'>244,000</div>
<div class='t b nb r' style='left:1463.48px;width:80px;top:749px'>256,200</div>
<div class='t b nb r' style='left:1552.48px;width:80px;top:749px'>269,010</div>
<div class='t b nb r' style='left:1641.48px;width:80px;top:749px'>282,461</div>
<div class='t b nb r' style='left:1730.48px;width:80px;top:749px'>296,584</div>
<svg class='bx' style='left:1365px;top:197px' width='7' height='7' viewBox='0 0 7 7'><path d='M0 0H6.5L0 6.5Z' fill='#1a7f1a'/></svg>
<svg class='bx' style='left:1365px;top:218px' width='7' height='7' viewBox='0 0 7 7'><path d='M0 0H6.5L0 6.5Z' fill='#1a7f1a'/></svg>
<svg class='bx' style='left:1365px;top:260px' width='7' height='7' viewBox='0 0 7 7'><path d='M0 0H6.5L0 6.5Z' fill='#1a7f1a'/></svg>
<svg class='bx' style='left:1365px;top:281px' width='7' height='7' viewBox='0 0 7 7'><path d='M0 0H6.5L0 6.5Z' fill='#1a7f1a'/></svg>
<div class='bx' style='left:296px;top:3px;width:1px;height:759px;background:#9a9a9a'></div>
<div class='bx' style='left:0;top:133px;width:1873px;height:1px;background:#a6a6a6'></div>
<div class='bx' style='left:1873px;top:0px;width:1px;height:762px;background:#e2e2e2'></div>
<div class='bx' style='left:0;top:3px;width:1px;height:15px;background:#c8c8c8'></div>
<div class='bx' style='left:0;top:18px;width:2px;height:744px;background:#217346'></div>
<div class='bx' style='left:0;top:762px;width:1874px;height:32px;background:#e6e6e6'></div>
<div class='bx' style='left:430px;top:762px;width:129px;height:28px;background:#fff;border-radius:0 0 5px 5px'></div>
<div class='bx' style='left:425px;top:762px;width:5px;height:5px;background:#fff'></div><div class='bx' style='left:420px;top:762px;width:10px;height:10px;background:#e6e6e6;border-radius:0 5px 0 0'></div>
<div class='bx' style='left:559px;top:762px;width:5px;height:5px;background:#fff'></div><div class='bx' style='left:559px;top:762px;width:10px;height:10px;background:#e6e6e6;border-radius:5px 0 0 0'></div>
<div class='bx' style='left:91px;top:766px;width:91px;height:24px;background:#474747;border-radius:5px'></div>
<div class='bx' style='left:191px;top:766px;width:123px;height:24px;background:#474747;border-radius:5px'></div>
<div class='tab' style='left:99.7px;color:#fff;letter-spacing:0.1px;'>Instructions</div>
<div class='tab' style='left:199.7px;color:#fff;letter-spacing:-0.285px;'>Explained Sheets</div>
<div class='tab' style='left:332.7px;color:#3c3c3c;letter-spacing:0.0px;'>Assumptions</div>
<div class='tab' style='left:437.9px;color:#222;letter-spacing:0.2px;-webkit-text-stroke:0.4px #222;top:768px;'>IncomeStatement</div>
<div class='tab' style='left:576.8px;color:#3c3c3c;letter-spacing:-0.49px;'>CashFlow</div>
<div class='tab' style='left:661.8px;color:#3c3c3c;letter-spacing:-0.39px;'>BalanceSheet</div>
<div class='tab' style='left:770.9px;color:#3c3c3c;letter-spacing:-0.67px;'>Loans1</div>
<div class='tab' style='left:838.8px;color:#3c3c3c;letter-spacing:-0.43px;'>Loans2</div>
<div class='tab' style='left:907.6px;color:#3c3c3c;letter-spacing:-0.45px;'>Loans3</div>
<div class='tab' style='left:975.5px;color:#3c3c3c;letter-spacing:-0.81px;'>Leases</div>
<div class='sep' style='left:186px'></div>
<div class='sep' style='left:318px'></div>
<div class='sep' style='left:563px'></div>
<div class='sep' style='left:648px'></div>
<div class='sep' style='left:758px'></div>
<div class='sep' style='left:825px'></div>
<div class='sep' style='left:894px'></div>
<div class='sep' style='left:963px'></div>
<div class='sep' style='left:1029px'></div>
<div class='sep' style='left:425px;top:769px;height:18px'></div>
<div class='bx' style='left:438px;top:785px;width:113px;height:2px;background:#107c41'></div>
<svg class='bx' style='left:2px;top:771px' width='44' height='14' viewBox='0 0 44 14'><path d='M7.5 2.2L2.0 6.6L7.5 11.0' fill='none' stroke='#8a8a8a' stroke-width='1.2'/><path d='M34.6 2.2L40.1 6.6L34.6 11.0' fill='none' stroke='#7d7d7d' stroke-width='1.2'/></svg>
<svg class='bx' style='left:1071px;top:771px' width='14' height='14' viewBox='0 0 14 14'><path d='M7 1.5V12.5M1.5 7H12.5' fill='none' stroke='#444' stroke-width='1.2'/></svg>
<div class='bx' style='left:1499px;top:774px;width:2px;height:2px;background:#444'></div>
<div class='bx' style='left:1499px;top:778px;width:2px;height:2px;background:#444'></div>
<div class='bx' style='left:1499px;top:782px;width:2px;height:2px;background:#444'></div>
<div class='bx' style='left:1516px;top:769px;width:358px;height:17px;background:#f5f5f5;border-radius:8.5px'></div>
<div class='bx' style='left:1533px;top:773px;width:139px;height:9px;background:#6f6f6f;border-radius:4.5px'></div>
<svg class='bx' style='left:1520px;top:772px' width='10' height='12' viewBox='0 0 10 12'><path d='M8 1.5V10.5L1 6Z' fill='#6f6f6f'/></svg>
<svg class='bx' style='left:1861px;top:772px' width='10' height='12' viewBox='0 0 10 12'><path d='M1.5 1.5V10.5L8.5 6Z' fill='#6f6f6f'/></svg>
</div></body></html>
